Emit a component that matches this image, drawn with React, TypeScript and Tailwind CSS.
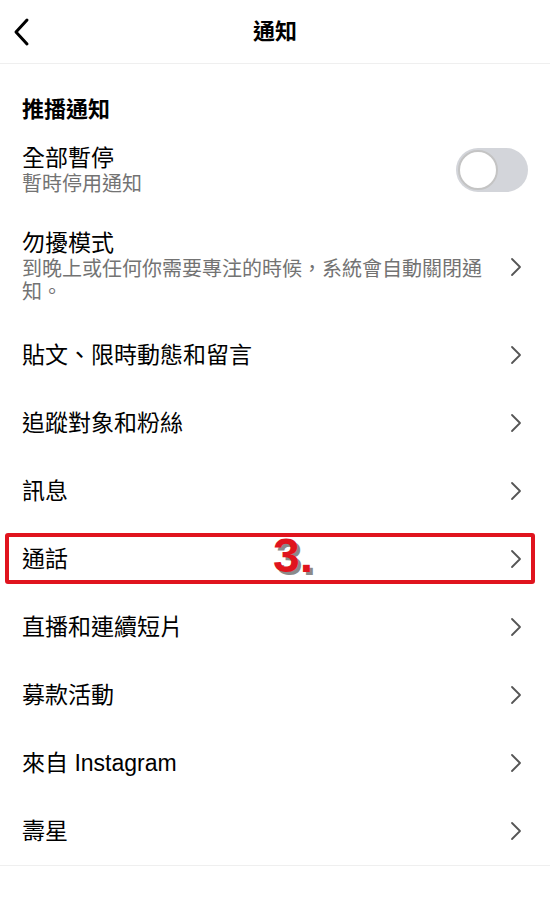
import React from 'react';

const font = { fontFamily: '"Liberation Sans", "Noto Sans CJK TC", sans-serif' };

function Chevron() {
  return (
    <svg width="12" height="20" viewBox="0 0 12 20" className="shrink-0">
      <polyline points="2,2 10,10 2,18" fill="none" stroke="#555" strokeWidth="1.8" strokeLinecap="round" strokeLinejoin="round" />
    </svg>
  );
}

function Row({ label, children }: { label: string; children?: React.ReactNode }) {
  return (
    <div className="relative flex h-[68px] items-center justify-between pl-[22px] pr-[28px]">
      <span className="text-[23px] leading-[28px] text-black">{label}</span>
      <Chevron />
      {children}
    </div>
  );
}

const rows = ['貼文、限時動態和留言', '追蹤對象和粉絲', '訊息', '通話', '直播和連續短片', '募款活動', '來自 Instagram', '壽星'];

export default function App() {
  return (
    <div className="h-[900px] w-[550px] bg-white" style={font}>
      {/* top bar */}
      <div className="relative flex h-[64px] items-center justify-center border-b border-[#efefef]">
        <svg width="20" height="30" viewBox="0 0 20 30" className="absolute left-[11px] top-[17px]">
          <polyline points="16,3 5,15 16,27" fill="none" stroke="#000" strokeWidth="3" strokeLinecap="round" strokeLinejoin="round" />
        </svg>
        <span className="text-[22px] font-bold text-black">通知</span>
      </div>

      <div className="pl-[22px] pt-[32px] text-[22px] font-bold leading-[28px] text-black">推播通知</div>

      {/* pause all */}
      <div className="mt-[20px] flex items-center justify-between pl-[22px] pr-[22px]">
        <div>
          <div className="text-[23px] leading-[28px] text-black">全部暫停</div>
          <div className="text-[20px] leading-[24px] text-[#737373]">暫時停用通知</div>
        </div>
        <div className="flex h-[44px] w-[72px] items-center rounded-full bg-[#d3d5da] px-[2px]">
          <div className="h-[40px] w-[40px] rounded-full border-2 border-[#c4c4c4] bg-white" />
        </div>
      </div>

      {/* do not disturb */}
      <div className="mt-[33px] flex items-center justify-between pl-[22px] pr-[28px]">
        <div className="w-[470px]">
          <div className="text-[23px] leading-[28px] text-black">勿擾模式</div>
          <div className="mt-[1px] text-[20px] leading-[23px] text-[#737373]">到晚上或任何你需要專注的時候，系統會自動關閉通知。</div>
        </div>
        <Chevron />
      </div>

      <div className="mt-[17px] border-b border-[#efefef]">
        {rows.map((r) =>
          r === '通話' ? (
            <Row key={r} label={r}>
              <div className="absolute bottom-[9px] left-[5px] right-[15px] top-[8px] rounded-[3px] border-4 border-[#e0141e]" />
              <span
                className="absolute left-[273px] top-[3px] text-[48px] font-bold leading-[56px] text-[#e0141e]"
                style={{ textShadow: '3px 3px 0 #8a8a8a' }}
              >
                3.
              </span>
            </Row>
          ) : (
            <Row key={r} label={r} />
          )
        )}
      </div>
    </div>
  );
}
